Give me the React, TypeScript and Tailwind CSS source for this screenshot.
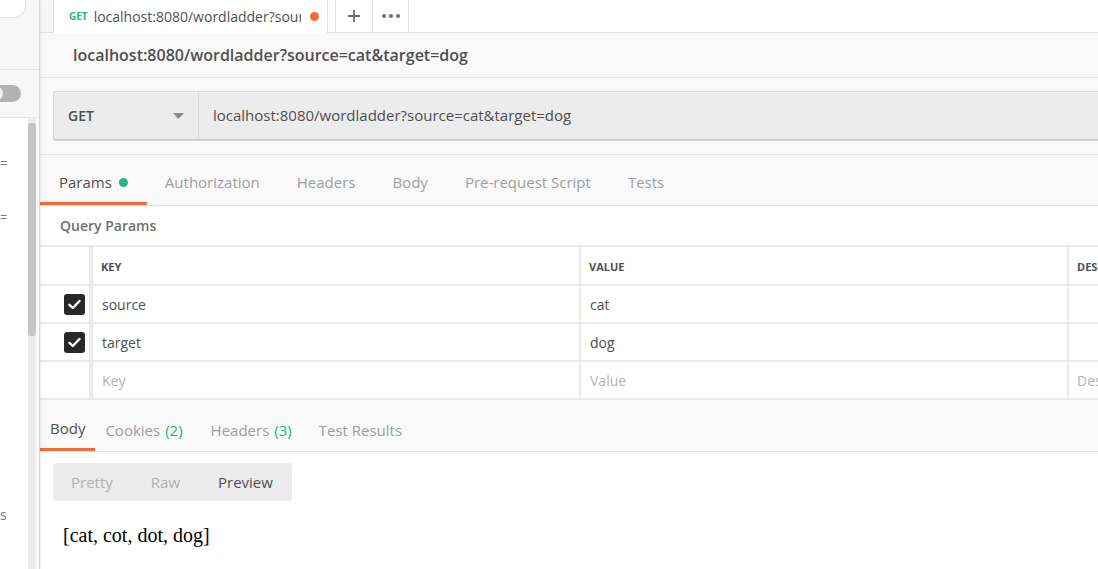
import React from 'react';

const font = { fontFamily: '"Open Sans", "Liberation Sans", sans-serif' };

function Check() {
  return (
    <div className="w-[21px] h-[21px] rounded-[3px] bg-[#282828] flex items-center justify-center">
      <svg width="13" height="11" viewBox="0 0 13 11" fill="none">
        <path d="M1.5 5.8 L4.8 9 L11.5 2" stroke="#fff" strokeWidth="2.4" strokeLinecap="round" strokeLinejoin="round" />
      </svg>
    </div>
  );
}

function Sidebar() {
  return (
    <div className="w-[40px] shrink-0 h-full flex flex-col border-r border-[#d6d6d6] shadow-[1px_0_3px_rgba(0,0,0,0.08)] relative z-10 bg-white">
      <div className="h-[70px] bg-[#f7f7f7] border-b border-[#e6e6e6] relative overflow-hidden">
        <div className="absolute -left-[30px] -top-[20px] w-[56px] h-[38px] bg-white border border-[#e3e3e3] rounded-[12px]" />
      </div>
      <div className="h-[48px] bg-[#f7f7f7] border-b border-[#e6e6e6] relative overflow-hidden">
        <div className="absolute -left-[12px] top-[15px] w-[33px] h-[17px] rounded-full bg-[#b2b2b2]" />
        <div className="absolute -left-[12px] top-[16px] w-[15px] h-[15px] rounded-full bg-[#f0f0f0]" />
      </div>
      <div className="flex-1 relative overflow-hidden">
        <div className="absolute left-[28px] top-0 bottom-0 w-[8px] bg-[#ececec]" />
        <div className="absolute left-[28px] top-[5px] h-[213px] w-[8px] rounded-[3px] bg-[#c6c6c6]" />
        <div className="absolute left-0 top-[36px] text-[13px] leading-[18px] text-[#777]">=</div>
        <div className="absolute left-0 top-[90px] text-[13px] leading-[18px] text-[#777]">=</div>
        <div className="absolute left-0 top-[388px] text-[14px] leading-[18px] text-[#777]">s</div>
      </div>
    </div>
  );
}

function TabBar() {
  return (
    <div className="h-[33px] flex bg-white shrink-0">
      <div className="w-[13px] bg-[#f7f7f7] border-b border-[#e3e3e3]" />
      <div className="w-[275px] flex items-center pl-[15px] pr-[8px] border-l border-r border-[#e3e3e3] bg-white">
        <span className="text-[10px] font-bold text-[#26b47f] mr-[6px]">GET</span>
        <span className="text-[14px] text-[#505050] whitespace-nowrap overflow-hidden w-[207px]">localhost:8080/wordladder?source=cat&amp;target=dog</span>
        <span className="ml-auto w-[9px] h-[9px] rounded-full bg-[#f26b3a]" />
      </div>
      <div className="w-[7px] border-b border-[#e3e3e3]" />
      <div className="w-[38px] flex items-center justify-center border-l border-r border-b border-[#e3e3e3]">
        <svg width="14" height="14" viewBox="0 0 14 14">
          <path d="M7 1 V13 M1 7 H13" stroke="#6a6a6a" strokeWidth="1.8" />
        </svg>
      </div>
      <div className="w-[36px] flex items-center justify-center gap-[3px] border-r border-b border-[#e3e3e3]">
        <span className="w-[4px] h-[4px] rounded-full bg-[#707070]" />
        <span className="w-[4px] h-[4px] rounded-full bg-[#707070]" />
        <span className="w-[4px] h-[4px] rounded-full bg-[#707070]" />
      </div>
      <div className="flex-1 border-b border-[#e3e3e3]" />
    </div>
  );
}

function ParamRow({ k, v, checked, placeholder }: { k: string; v: string; checked?: boolean; placeholder?: boolean }) {
  const color = placeholder ? 'text-[#b3b3b3]' : 'text-[#505050]';
  return (
    <div className="h-[38px] flex border-b-2 border-[#ebebeb]">
      <div className="w-[53px] shrink-0 flex items-center justify-end pr-[4px] border-r-4 border-[#ebebeb]">
        {checked && <Check />}
      </div>
      <div className={`w-[488px] shrink-0 flex items-center pl-[9px] text-[14px] border-r-2 border-[#ebebeb] ${color}`}>{k}</div>
      <div className={`w-[488px] shrink-0 flex items-center pl-[9px] text-[14px] border-r-2 border-[#ebebeb] ${color}`}>{v}</div>
      <div className={`w-[200px] shrink-0 flex items-center pl-[8px] text-[14px] ${color}`}>{placeholder ? 'Description' : ''}</div>
    </div>
  );
}

export default function App() {
  const reqTabs = ['Authorization', 'Headers', 'Body', 'Pre-request Script', 'Tests'];
  return (
    <div className="w-[1098px] h-[569px] flex overflow-hidden bg-white" style={font}>
      <Sidebar />
      <div className="flex-1 min-w-0 flex flex-col overflow-hidden">
        <TabBar />
        <div className="bg-[#f9f9f9] shrink-0">
          <div className="h-[45px] flex items-center pl-[33px] border-b border-[#e6e6e6] text-[16px] font-semibold text-[#505050] whitespace-nowrap">
            localhost:8080/wordladder?source=cat&amp;target=dog
          </div>
          <div className="h-[77px] pt-[13px] pl-[13px] border-b border-[#e6e6e6]">
            <div className="h-[50px] flex border border-r-0 border-b-2 border-[#d9d9d9] border-b-[#cfcfcf] rounded-l-[3px] bg-[#ececec]">
              <div className="w-[145px] flex items-center pl-[14px] pr-[14px] border-r border-[#d9d9d9]">
                <span className="text-[14px] font-semibold text-[#505050]">GET</span>
                <svg className="ml-auto" width="11" height="6" viewBox="0 0 11 6">
                  <path d="M0 0 H11 L5.5 6 Z" fill="#8a8a8a" />
                </svg>
              </div>
              <div className="flex-1 flex items-center pl-[14px] text-[15px] text-[#505050] whitespace-nowrap">
                localhost:8080/wordladder?source=cat&amp;target=dog
              </div>
            </div>
          </div>
          <div className="h-[51px] flex items-end border-b border-[#e3e3e3]">
            <div className="h-full flex items-center px-[19px] border-b-[3px] border-[#f26b3a] pt-[8px]">
              <span className="text-[15px] text-[#505050]">Params</span>
              <span className="ml-[7px] w-[9px] h-[9px] rounded-full bg-[#26b47f]" />
            </div>
            {reqTabs.map((t) => (
              <div key={t} className="h-full flex items-center pl-[18px] pr-[19px] pt-[8px] border-b-[3px] border-transparent text-[15px] text-[#a0a0a0] whitespace-nowrap">
                {t}
              </div>
            ))}
          </div>
        </div>
        <div className="bg-white shrink-0">
          <div className="h-[41px] flex items-center pl-[20px] text-[14px] font-semibold text-[#707070] border-b-2 border-[#ebebeb]">
            Query Params
          </div>
          <div className="h-[39px] flex border-b-2 border-[#ebebeb] pt-[3px]">
            <div className="w-[53px] shrink-0 border-r-4 border-[#ebebeb] -mt-[3px]" />
            <div className="w-[488px] shrink-0 flex items-center pl-[8px] text-[11px] font-bold text-[#505050] border-r-2 border-[#ebebeb] -mt-[3px] pt-[3px]">KEY</div>
            <div className="w-[488px] shrink-0 flex items-center pl-[8px] text-[11px] font-bold text-[#505050] border-r-2 border-[#ebebeb] -mt-[3px] pt-[3px]">VALUE</div>
            <div className="w-[200px] shrink-0 flex items-center pl-[8px] text-[11px] font-bold text-[#505050] whitespace-nowrap -mt-[3px] pt-[3px]">DESCRIPTION</div>
          </div>
          <ParamRow k="source" v="cat" checked />
          <ParamRow k="target" v="dog" checked />
          <ParamRow k="Key" v="Value" placeholder />
        </div>
        <div className="h-[52px] shrink-0 bg-[#f9f9f9] flex items-end border-b border-[#e3e3e3]">
          <div className="h-full flex items-center px-[10px] pt-[9px] border-b-[3px] border-[#f26b3a] text-[15px] text-[#505050]">Body</div>
          <div className="h-full flex items-center pl-[10px] pr-[14px] pt-[9px] text-[15px] text-[#a0a0a0] whitespace-nowrap">
            Cookies <span className="ml-[5px] text-[#26b47f]">(2)</span>
          </div>
          <div className="h-full flex items-center pl-[14px] pr-[14px] pt-[9px] text-[15px] text-[#a0a0a0] whitespace-nowrap">
            Headers <span className="ml-[5px] text-[#26b47f]">(3)</span>
          </div>
          <div className="h-full flex items-center px-[13px] pt-[9px] text-[15px] text-[#a0a0a0] whitespace-nowrap">Test Results</div>
        </div>
        <div className="flex-1 bg-white pl-[13px] pt-[11px]">
          <div className="inline-flex h-[38px] rounded-[3px] bg-[#ececec] text-[15px]">
            <div className="flex items-center pl-[18px] pr-[19px] text-[#b0b0b0]">Pretty</div>
            <div className="flex items-center pl-[19px] pr-[19px] text-[#b0b0b0]">Raw</div>
            <div className="flex items-center pl-[19px] pr-[19px] text-[#505050]">Preview</div>
          </div>
          <div className="mt-[19px] pl-[10px] text-[20px] text-black" style={{ fontFamily: '"Liberation Serif", "Times New Roman", serif' }}>
            [cat, cot, dot, dog]
          </div>
        </div>
      </div>
    </div>
  );
}
